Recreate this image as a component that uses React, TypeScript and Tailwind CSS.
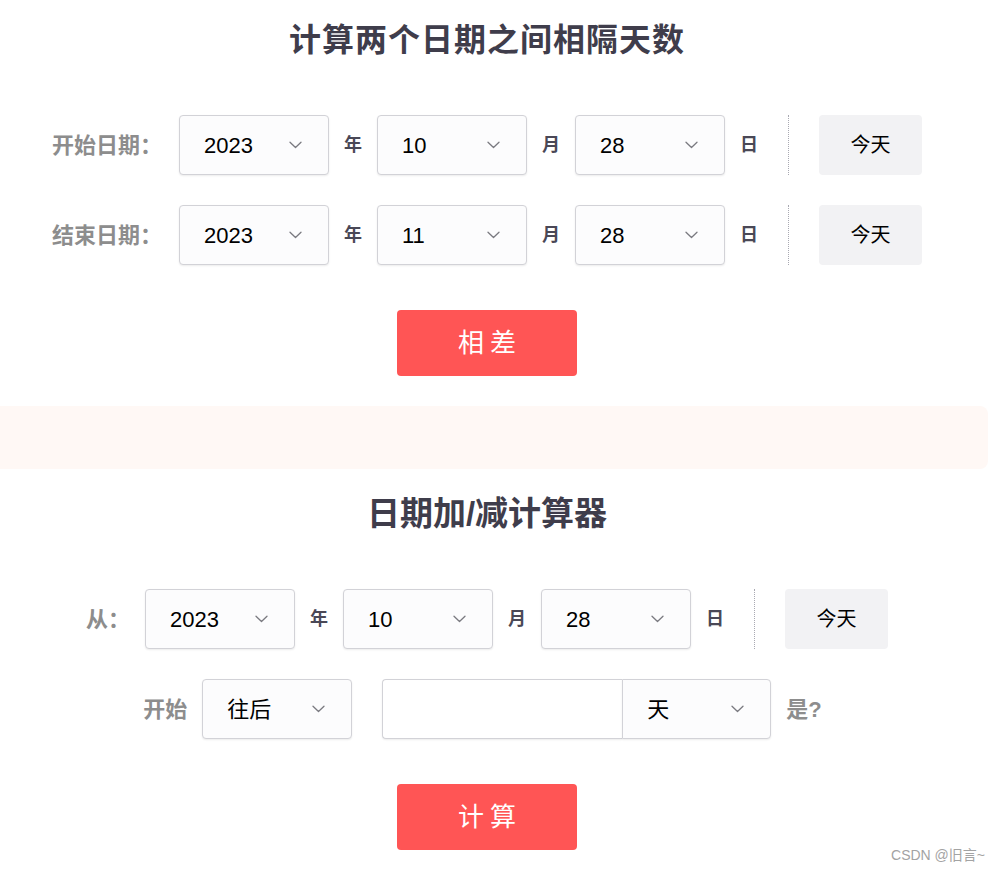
import type { ReactNode } from "react";

function Chevron() {
  return (
    <svg width="13" height="8" viewBox="0 0 13 8" fill="none" className="shrink-0">
      <path d="M1 1.2l5.5 5.3L12 1.2" stroke="#7a7a80" strokeWidth="1.3" strokeLinecap="round" strokeLinejoin="round" />
    </svg>
  );
}

function Select({ value, className = "rounded w-[150px]" }: { value: string; className?: string }) {
  return (
    <div
      className={`flex h-[60px] shrink-0 items-center justify-between border border-[#d2d2d7] bg-[#fcfcfd] pl-6 pr-[26px] text-[22px] text-black shadow-[0_1px_2px_rgba(0,0,0,0.08)] ${className}`}
    >
      <span>{value}</span>
      <Chevron />
    </div>
  );
}

function Unit({ children }: { children: ReactNode }) {
  return <span className="mx-[15px] w-[18px] shrink-0 text-[18px] font-bold leading-none text-[#4a4856]">{children}</span>;
}

function DateRow({ label, labelGap, year, month, day }: { label: string; labelGap: string; year: string; month: string; day: string }) {
  return (
    <div className="flex items-center justify-center">
      <span className={`text-[22px] font-bold text-[#8d8d8d] ${labelGap}`}>{label}</span>
      <Select value={year} />
      <Unit>年</Unit>
      <Select value={month} />
      <Unit>月</Unit>
      <Select value={day} />
      <Unit>日</Unit>
      <div className="ml-[15px] mr-[30px] h-[60px] border-l border-dotted border-[#a9a9b2]" />
      <button type="button" className="h-[60px] w-[103px] rounded bg-[#f2f2f4] text-[20px] text-black">
        今天
      </button>
    </div>
  );
}

function RedButton({ label }: { label: string }) {
  return (
    <button
      type="button"
      className="mx-auto flex h-[66px] w-[180px] items-center justify-center rounded bg-[#ff5555] pl-[6px] text-[26px] tracking-[6px] text-white"
    >
      {label}
    </button>
  );
}

export default function App() {
  return (
    <div className="relative h-[870px] w-[997px] overflow-hidden bg-white font-['Liberation_Sans','Noto_Sans_CJK_SC',sans-serif]">
      <div className="flex w-[974px] flex-col pt-4">
        <h1 className="text-center text-[32px] font-bold leading-[48px] tracking-[1px] text-[#3f3d4b]">计算两个日期之间相隔天数</h1>

        <div className="mt-[51px]">
          <DateRow label="开始日期：" labelGap="mr-[17px]" year="2023" month="10" day="28" />
        </div>
        <div className="mt-[30px]">
          <DateRow label="结束日期：" labelGap="mr-[17px]" year="2023" month="11" day="28" />
        </div>

        <div className="mt-[45px]">
          <RedButton label="相差" />
        </div>

        <div className="-ml-3 mt-[30px] h-[63px] w-[1000px] rounded-lg bg-[#fff8f5]" />

        <h2 className="mt-[21px] text-center text-[33px] font-bold leading-[48px] text-[#3f3d4b]">日期加/减计算器</h2>

        <div className="mt-[51px]">
          <DateRow label="从：" labelGap="mr-[15px]" year="2023" month="10" day="28" />
        </div>

        <div className="mt-[30px] flex items-center justify-center pr-[9px]">
          <span className="mr-[15px] text-[22px] font-bold text-[#8d8d8d]">开始</span>
          <Select value="往后" />
          <div className="ml-[30px] flex">
            <div className="h-[60px] w-[240px] rounded-l border border-r-0 border-[#d2d2d7] bg-white shadow-[0_1px_2px_rgba(0,0,0,0.08)]" />
            <Select value="天" className="w-[149px] rounded-r" />
          </div>
          <span className="ml-[15px] text-[22px] font-bold text-[#8d8d8d]">是?</span>
        </div>

        <div className="mt-[45px]">
          <RedButton label="计算" />
        </div>
      </div>

      <span className="absolute right-[12px] top-[845px] text-[14px] text-[#a3a3a3]">CSDN @旧言~</span>
    </div>
  );
}
